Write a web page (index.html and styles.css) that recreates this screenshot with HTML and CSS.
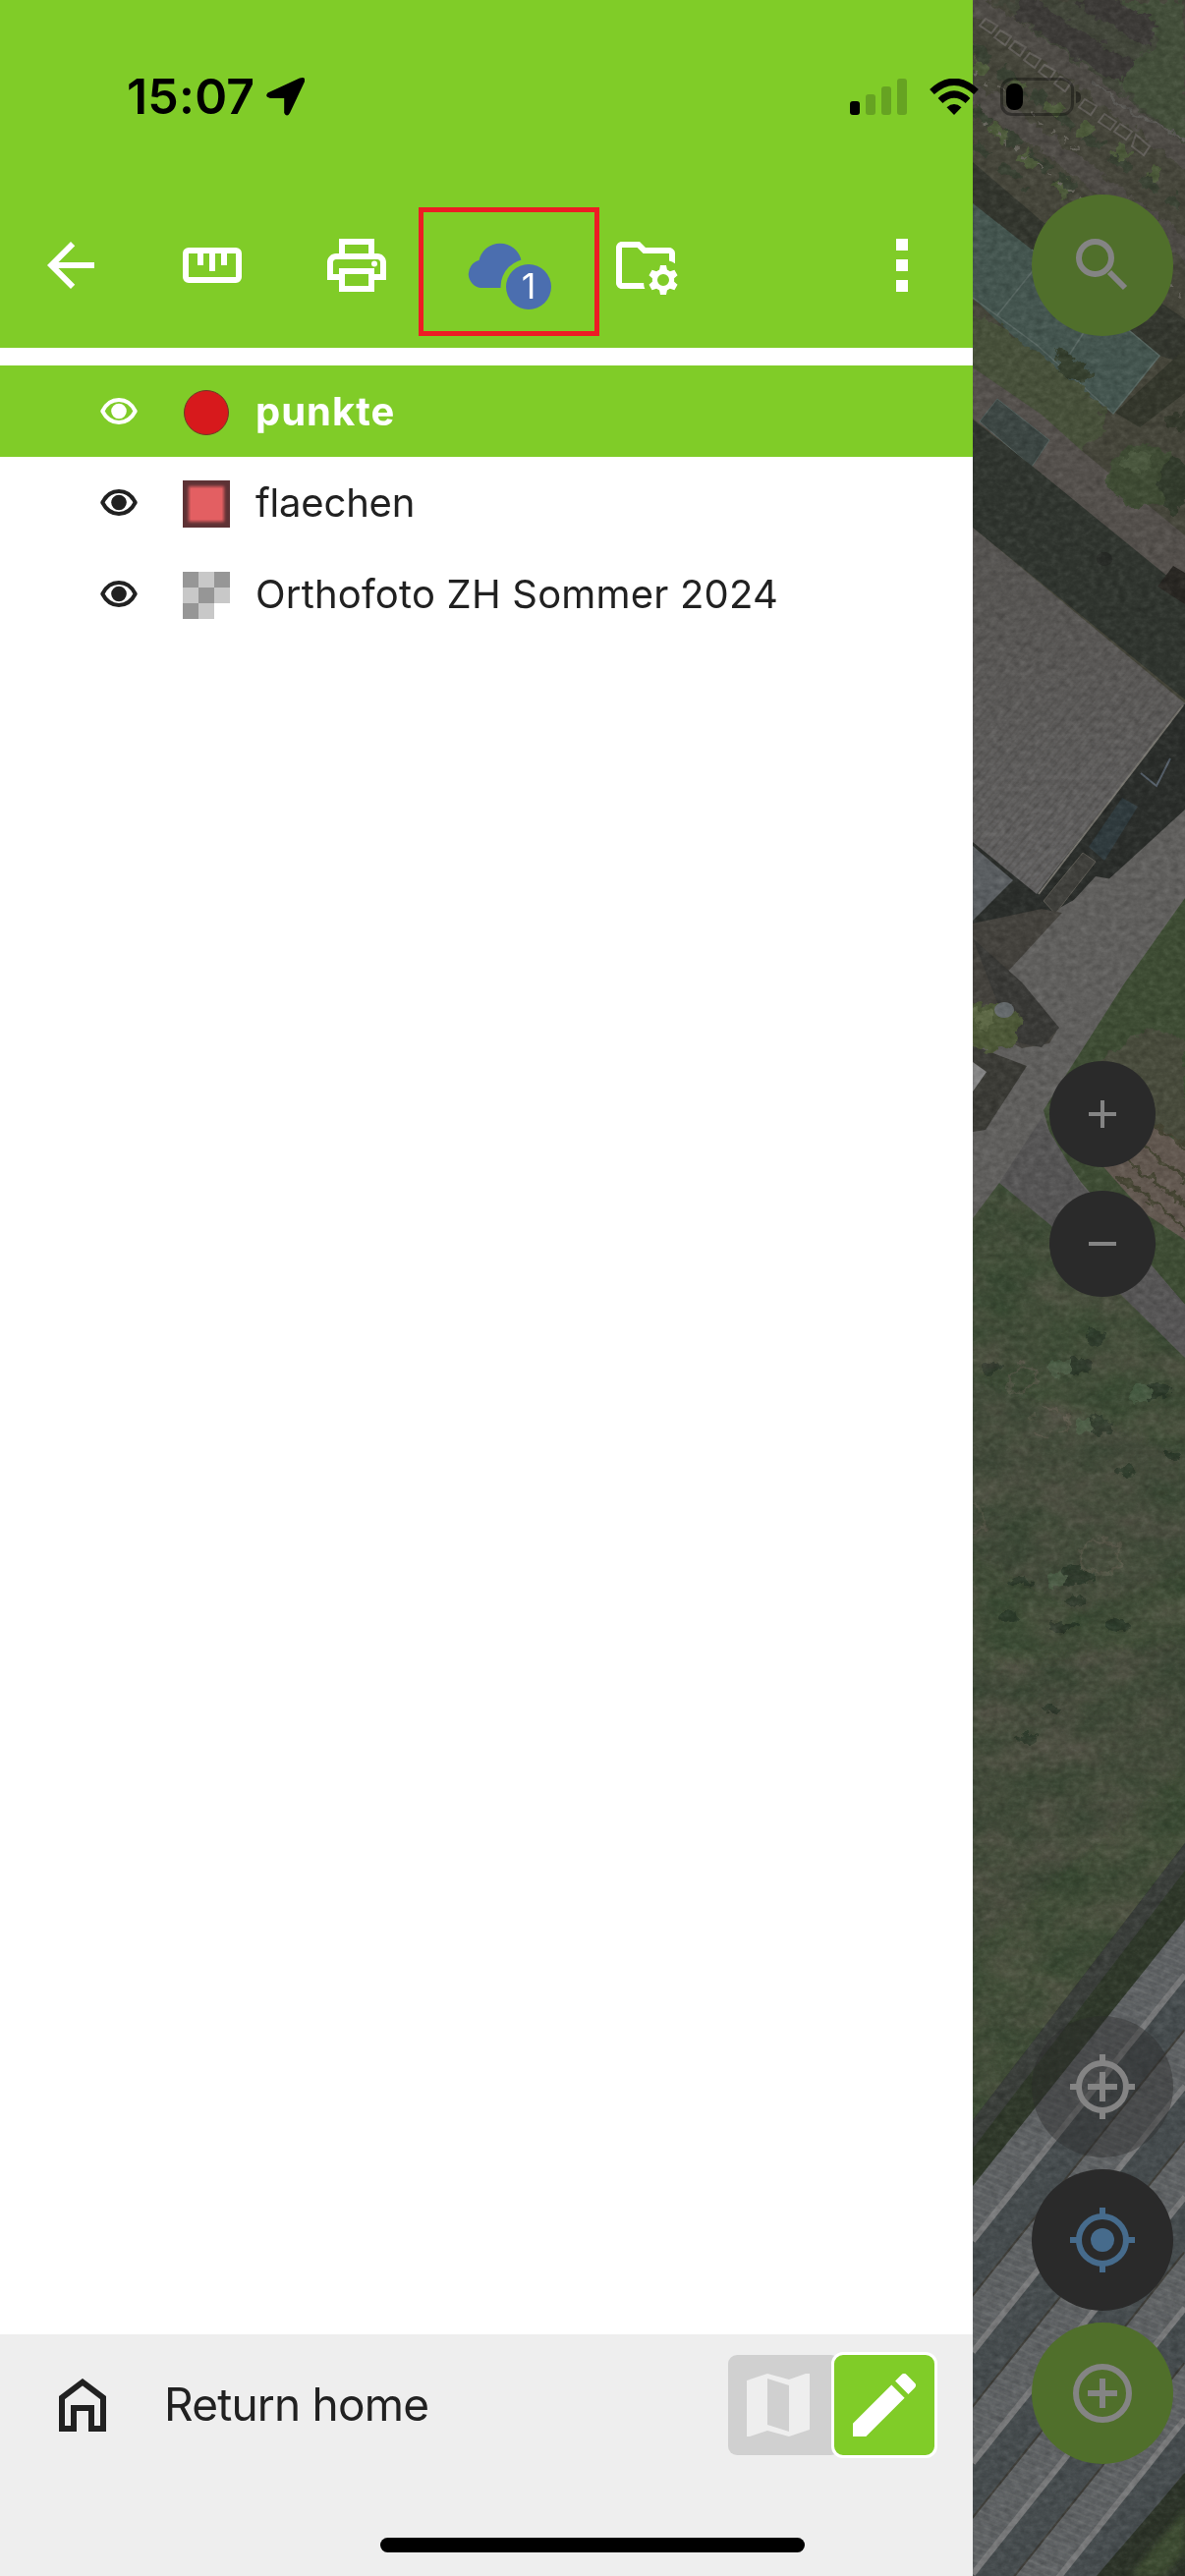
FILE: index.html
```html
<!DOCTYPE html>
<html lang="en">
<head>
<meta charset="utf-8">
<title>Map layers</title>
<link rel="stylesheet" href="styles.css">
</head>
<body>
<div class="screen">
  <aside class="drawer">
    <header class="toolbar">
      <button class="tool" aria-label="Back"><svg class="icon" viewBox="0 0 24 24"><path d="M20 11H7.83l5.59-5.59L12 4l-8 8 8 8 1.41-1.41L7.83 13H20z"/></svg></button>
      <button class="tool" aria-label="Measure"><svg class="icon" viewBox="0 0 24 24"><path fill-rule="evenodd" d="M4 6h16a2 2 0 0 1 2 2v8a2 2 0 0 1-2 2H4a2 2 0 0 1-2-2V8a2 2 0 0 1 2-2zM4 8v8h16V8h-3v4h-2V8h-2v6h-2V8H9v4H7V8z"/></svg></button>
      <button class="tool" aria-label="Print"><svg class="icon" viewBox="0 0 24 24"><path fill-rule="evenodd" d="M19 8h-1V3H6v5H5c-1.66 0-3 1.34-3 3v6h4v4h12v-4h4v-6c0-1.66-1.34-3-3-3zM8 5h8v3H8zM16 19H8v-4h8zM18 15v-2H6v2H4v-4c0-.55.45-1 1-1h14c.55 0 1 .45 1 1v4z"/><circle cx="18" cy="11.5" r="1"/></svg></button>
      <button class="cloud" aria-label="Cloud changes">
        <svg class="cloud-icon" viewBox="0 0 88 72">
          <defs><mask id="bite"><rect width="88" height="72" fill="#fff"/><circle cx="64" cy="47" r="28.500" fill="#000"/></mask></defs>
          <path mask="url(#bite)" d="M15 48A14.300 14.300 0 0 1 13.500 20A22 22 0 0 1 56.500 20V48z"/>
        </svg>
        <span class="badge">1</span>
      </button>
      <button class="tool" aria-label="Project folder"><svg class="icon" viewBox="0 0 24 24"><path d="M4 4C2.900 4 2 4.900 2 6v12c0 1.100.9 2 2 2h7.800q-.5-1-.4-2H4V6h5.200l2 2H20v2.500q1.100.3 2 .9V8c0-1.100-.9-2-2-2h-8l-2-2z"/><path fill-rule="evenodd" d="M17 12h2l.3 1.500 1 .6 1.500-.5 1.050 1.800-1.150 1v1.200l1.150 1-1.050 1.800-1.500-.5-1 .6L19 22h-2l-.3-1.500-1-.6-1.500.5-1.050-1.800 1.150-1v-1.200l-1.150-1 1.050-1.800 1.500.5 1-.6zM18 15a2 2 0 1 0 0 4 2 2 0 0 0 0-4z"/></svg></button>
      <button class="tool more" aria-label="More"><i></i><i></i><i></i></button>
    </header>

    <ul class="layers">
      <li class="layer active">
        <svg class="eye" viewBox="0 0 38 27"><path class="lid" d="M2.300 13.500C10-1.700 28-1.700 35.700 13.500C28 28.700 10 28.700 2.300 13.500z"/><circle cx="19" cy="13.500" r="7.800"/></svg>
        <span class="symbol point"></span><span class="name">punkte</span>
      </li>
      <li class="layer">
        <svg class="eye" viewBox="0 0 38 27"><path class="lid" d="M2.300 13.500C10-1.700 28-1.700 35.700 13.500C28 28.700 10 28.700 2.300 13.500z"/><circle cx="19" cy="13.500" r="7.800"/></svg>
        <span class="symbol area"></span><span class="name tight">flaechen</span>
      </li>
      <li class="layer">
        <svg class="eye" viewBox="0 0 38 27"><path class="lid" d="M2.300 13.500C10-1.700 28-1.700 35.700 13.500C28 28.700 10 28.700 2.300 13.500z"/><circle cx="19" cy="13.500" r="7.800"/></svg>
        <span class="symbol raster"><i></i><i></i><i></i><i></i><i></i><i></i><i></i><i></i></span><span class="name">Orthofoto ZH Sommer 2024</span>
      </li>
    </ul>

    <footer class="bottom">
      <svg class="home" viewBox="0 0 48 54"><path d="M3 51V19.500L24 3.700l21 15.800V51H33V30H15v21z"/></svg>
      <span class="return">Return home</span>
      <div class="modes">
        <button class="mode browse" aria-label="Browse"><svg viewBox="0 0 64 64"><path fill-rule="evenodd" d="M0 7L21 0L43 6L60 0H64V57L43 64L21 58L3 64H0zM21 5V52L43 59V12z"/></svg></button>
        <button class="mode edit" aria-label="Edit"><svg viewBox="0 0 64 64"><path d="M0 50.700V64H13.300L52.600 24.700L39.300 11.400zM62.900 14.400a3.500 3.500 0 0 0 0-5L54.600 1a3.500 3.500 0 0 0-5 0L43.100 7.500L56.400 20.900z"/></svg></button>
      </div>
    </footer>
  </aside>

  <main class="map">
    <svg class="ortho" viewBox="990 0 216 2622" preserveAspectRatio="none">
      <defs>
        <filter id="grain" x="0" y="0" width="1" height="1" color-interpolation-filters="sRGB"><feTurbulence type="fractalNoise" baseFrequency=".13 .17" numOctaves="4" seed="4"/><feColorMatrix values=".8 .8 0 0 -.3 .8 .8 0 0 -.3 .8 .8 0 0 -.3 0 0 0 0 1"/></filter>
        <filter id="patches" x="0" y="0" width="1" height="1" color-interpolation-filters="sRGB"><feTurbulence type="fractalNoise" baseFrequency=".018 .03" numOctaves="4" seed="9"/><feColorMatrix values="1.600 0 0 0 -.3 .8 .2 0 0 .02 1.200 0 0 0 -.1 0 0 0 0 1"/></filter>
        <filter id="rough" x="-.2" y="-.2" width="1.400" height="1.400" color-interpolation-filters="sRGB"><feTurbulence type="fractalNoise" baseFrequency=".09" numOctaves="3" seed="2"/><feDisplacementMap in="SourceGraphic" scale="16" xChannelSelector="R" yChannelSelector="G"/></filter>
        <filter id="soft"><feGaussianBlur stdDeviation="3"/></filter>
        <linearGradient id="roof" x1="0" y1="0" x2="0" y2="1"><stop stop-color="#555350"/><stop offset="1" stop-color="#636262"/></linearGradient>
        <pattern id="ribs" width="7" height="7" patternUnits="userSpaceOnUse" patternTransform="rotate(22)"><rect width="7" height="7" fill="#5d6062"/><path d="M0 2H7" stroke="#686a6b" stroke-width="1.300"/></pattern>
        <pattern id="tiles" width="6" height="6" patternUnits="userSpaceOnUse" patternTransform="rotate(-50)"><path d="M0 3H6" stroke="#53514f" stroke-width="1"/></pattern>
        <g id="tunnel">
          <path fill="url(#ribs)" d="M990 2225L1206 1954V2011L990 2282z"/>
          <path fill="#464c4e" d="M990 2282L1206 2011V2068L990 2339z"/>
          <path stroke="#777879" stroke-width="6" d="M990 2281L1206 2010"/>
          <path stroke="#3e3d38" stroke-width="4" d="M990 2338L1206 2067"/>
        </g>
      </defs>
      <path fill="#45453a" d="M990 0H1206V2622H990z"/>
      <g filter="url(#rough)">
        <path fill="#42463a" d="M1014 0H1206V165L1110 83z"/>
        <path fill="#434e3a" d="M1142 0H1206V145L1132 82L1180 42z"/>
        <path stroke="#3c3a37" stroke-width="26" d="M1038 5L1146 75M1104 -4L1172 36"/>
        <path stroke="#4e4b46" stroke-width="20" fill="none" d="M984 -3L1110 85L1212 165M984 92L1085 161L1212 258"/>
        <path stroke="#5b5a56" stroke-width="3" fill="none" d="M1112 83L1145 110L1212 145"/>
        <path stroke="#394133" stroke-width="11" fill="none" stroke-dasharray="22 14" d="M990 48L1095 132L1200 210M992 112L1095 196M990 145L1050 193"/>
        <path stroke="#4d5a3b" stroke-width="12" fill="none" stroke-dasharray="18 24" d="M990 65L1080 115L1180 180M1010 130L1100 210"/>
        <path stroke="#66645c" stroke-width="3" fill="none" stroke-dasharray="5 9" d="M992 73L1103 157M1000 125L1104 205L1206 302"/>
      </g>
      <path fill="#33362e" d="M990 165L1060 225L1206 325V370L1180 362L990 215z"/>
      <g fill="none" stroke="#625f5a" stroke-width="2"><path d="M1003 19l12 7-6 8-12-8zM1018 31l11 6-6 9-11-8zM1033 42l11 6-6 9-11-8zM1048 54l11 6-6 9-11-8zM1063 66l11 6-6 9-11-8zM1079 78l11 6-6 9-11-8zM1104 101l12 7-6 9-12-8zM1124 116l12 8-6 8-12-8zM1140 126l12 8-6 8-12-8zM1156 137l14 12-6 9-12-9z"/></g>
      <path fill="#44554f" d="M990 207L1050 254L1180 362L1133 421L1055 365L990 303z"/>
      <path fill="none" stroke="#586762" stroke-width="1.500" d="M990 303L1055 351L1133 421L1180 362L1050 254M1014 322L1062 262M1080 374L1118 315"/>
      <g filter="url(#rough)">
        <path fill="#47503a" d="M985 320L1010 325L1120 410L1125 440L1100 460L985 376z"/>
        <path fill="#36402f" d="M1075 352l35 28-8 10-24-10z"/>
      </g>
      <path fill="#54504c" d="M990 374L1060 422L1100 458L1206 545V604L1050 474L990 426z"/>
      <path fill="#3c4643" stroke="#53605d" d="M997 429L1015 406L1068 448L1050 475z"/>
      <path fill="#34372c" d="M1135 420L1206 355V400L1160 435z"/>
      <g filter="url(#rough)"><ellipse cx="1165" cy="485" rx="37" ry="32" fill="#3f4b34"/><ellipse cx="1195" cy="493" rx="15" ry="28" fill="#323b2c"/><ellipse cx="1157" cy="470" rx="14" ry="11" fill="#4b583f"/><ellipse cx="1199" cy="430" rx="14" ry="9" fill="#34392c"/></g>
      <path fill="#30352f" d="M990 427L1050 474L1206 601V712L990 537z"/>
      <ellipse cx="1124" cy="569" rx="8" ry="7" fill="#272a26"/>
      <path fill="#292723" d="M1178 597L1194 576L1206 583V615z"/>
      <path fill="#605f5d" d="M990 840L1206 720V1382L990 1240z"/>
      <path fill="#2b2e2b" d="M1206 716V824L1125 898L1050 940L1020 995L990 975V850z"/>
      <path fill="url(#roof)" d="M990 537L1206 716L1055 910L990 857z"/><path fill="url(#tiles)" d="M990 537L1206 716L1055 910L990 857z"/>
      <path stroke="#75736d" stroke-width="2" d="M1204 718L1057 910"/>
      <path fill="#303b3e" d="M1108 862L1142 812L1158 821L1124 876z"/>
      <path fill="#40403c" stroke="#5b5952" d="M1062 917L1102 868L1115 877L1074 930z"/>
      <path fill="none" stroke="#56606a" stroke-width="2" d="M1161 787L1177 800L1191 772"/>
      <path fill="#5a5e61" d="M990 861L1031 896L990 937z"/>
      <path fill="#44423d" d="M990 940L1060 925L1100 933L1020 995L1035 1000L1078 1045L1068 1062L1040 1067L990 1040z"/>
      <path fill="#605f5d" d="M1020 995L1115 892L1160 900L1160 960L1075 1050z"/>
      <path fill="#393936" d="M990 955L1040 1000L1078 1046L1060 1066L1030 1060z"/>
      <path fill="#3b3b36" d="M990 1064L1045 1085L1003 1150L990 1152z"/><path fill="#858585" d="M990 1081L1004 1091L990 1111z"/>
      <g filter="url(#rough)"><ellipse cx="1007" cy="1045" rx="32" ry="24" fill="#4d5838"/><ellipse cx="1000" cy="1036" rx="12" ry="9" fill="#5d6846"/></g>
      <ellipse cx="1022" cy="1028" rx="10" ry="8" fill="#656a6c"/>
      <path fill="#3e4c34" d="M1206 914L1145 1000L1062 1130L1070 1160L1100 1203L1206 1328z"/>
      <path fill="#484b3c" filter="url(#rough)" d="M1206 1058L1166 1045L1120 1080L1170 1145L1206 1170z"/>
      <path fill="#625850" d="M1170 1142L1206 1168V1262L1165 1235L1118 1182z"/>
      <path stroke="#454433" stroke-width="4" filter="url(#rough)" d="M1165 1138L1210 1172M1153 1158L1210 1202M1143 1177L1210 1229M1136 1194L1210 1254"/>
      <path fill="#565555" d="M1060 1138L1100 1205L1206 1328V1382L1068 1246L1017 1204z"/>
      <path fill="#414c38" d="M990 1240L1017 1204L1068 1246L1206 1382V1900L990 2180z"/>
      <path filter="url(#soft)" fill="#474b3c" d="M985 1400L1206 1480V1600L1100 1640L985 1580zM985 1700L1206 1670V1800L985 1990z" opacity=".6"/>
      <g filter="url(#rough)">
        <g fill="#2f3b2c"><ellipse cx="1114" cy="1361" rx="10" ry="8"/><ellipse cx="1097" cy="1389" rx="15" ry="8"/><ellipse cx="1009" cy="1392" rx="12" ry="6"/><ellipse cx="1177" cy="1415" rx="15" ry="9"/><ellipse cx="1118" cy="1451" rx="15" ry="9"/><ellipse cx="1146" cy="1497" rx="12" ry="4"/><ellipse cx="1192" cy="1481" rx="9" ry="4"/><ellipse cx="1096" cy="1605" rx="16" ry="9"/><ellipse cx="1095" cy="1630" rx="9" ry="6"/><ellipse cx="1038" cy="1610" rx="13" ry="4"/><ellipse cx="1026" cy="1646" rx="11" ry="6"/><ellipse cx="1085" cy="1655" rx="15" ry="4"/><ellipse cx="1140" cy="1655" rx="12" ry="5"/><ellipse cx="1068" cy="1740" rx="11" ry="4"/><ellipse cx="1045" cy="1769" rx="13" ry="4"/></g>
        <g fill="#4b5b45"><ellipse cx="1079" cy="1391" rx="12" ry="10"/><ellipse cx="1160" cy="1418" rx="11" ry="11"/><ellipse cx="1104" cy="1452" rx="9" ry="8"/><ellipse cx="1074" cy="1606" rx="8" ry="7"/></g>
        <g fill="none" stroke="#525445" stroke-width="3"><ellipse cx="1040" cy="1403" rx="14" ry="13"/><ellipse cx="1068" cy="1448" rx="20" ry="14" stroke-dasharray="16 9"/><ellipse cx="1120" cy="1584" rx="20" ry="17"/><ellipse cx="992" cy="1545" rx="10" ry="14"/></g>
      </g>
      <path fill="#2f382a" d="M990 2158L1206 1876V1970L990 2240z"/>
      <path fill="#3a3e3a" d="M990 2158L1206 1876V1904L990 2187z"/>
      <use href="#tunnel"/><use href="#tunnel" y="113"/><use href="#tunnel" y="226"/><use href="#tunnel" y="339"/><use href="#tunnel" y="452"/>
      <path fill="#2c3328" d="M1206 2517L1116 2622H1206z"/><path fill="#3e4b32" filter="url(#soft)" d="M1206 2555L1150 2622H1185L1206 2597z"/>
      <!-- the filter fills its bounding box, so the patches are clipped to the meadow -->
      <clipPath id="meadow"><path d="M990 1240L1017 1204L1068 1246L1206 1382V1876L990 2158z"/></clipPath>
      <g class="mottle" clip-path="url(#meadow)"><rect x="990" y="1200" width="216" height="960" filter="url(#patches)"/></g>
      <rect class="grain" x="990" y="0" width="216" height="2622" filter="url(#grain)"/>
    </svg>
    <nav class="fabs">
      <button class="fab green" aria-label="Search"><svg viewBox="0 0 72 72"><circle cx="28.500" cy="28.500" r="16.500"/><path d="M43 43L59 59"/></svg></button>
      <div class="zooms">
        <button class="fab small" aria-label="Zoom in"><svg viewBox="0 0 72 72"><path d="M22 36H50M36 22V50"/></svg></button>
        <button class="fab small" aria-label="Zoom out"><svg viewBox="0 0 72 72"><path d="M22 36H50"/></svg></button>
      </div>
      <div class="actions">
        <button class="fab clear" aria-label="Lock to position"><svg viewBox="0 0 72 72"><circle cx="36" cy="36" r="24"/><path d="M21 36H51M36 21V51M36 3V12M36 60V69M3 36H12M60 36H69"/></svg></button>
        <button class="fab dark" aria-label="My location"><svg viewBox="0 0 72 72"><circle cx="36" cy="36" r="24"/><circle class="dot" cx="36" cy="36" r="12"/><path d="M36 3V12M36 60V69M3 36H12M60 36H69"/></svg></button>
        <button class="fab green" aria-label="Add feature"><svg viewBox="0 0 72 72"><circle cx="36" cy="36" r="27"/><path d="M21 36H51M36 21V51"/></svg></button>
      </div>
    </nav>
  </main>

  <div class="status">
    <span class="time">15:07</span>
    <svg class="locate" viewBox="0 0 39 39"><path d="M34 .6Q40.500-1.500 38.800 4.500L24 36Q21 41 18.200 36V21H4Q-2 19.500 1.500 15.500z"/></svg>
    <svg class="signal" viewBox="0 0 58 37"><rect y="23" width="10" height="14" rx="3"/><g fill="#66a322"><rect x="16" y="16" width="10" height="21" rx="3"/><rect x="32" y="8" width="10" height="29" rx="3"/><rect x="48" width="10" height="37" rx="3"/></g></svg>
    <svg class="wifi" viewBox="0 0 50 37"><path d="M25 37L17.500 29.300Q25 22.500 32.500 29.300z"/><path class="arc" d="M11 22.500Q25 9.500 39 22.500M2.500 13.500Q25-7 47.500 13.500"/></svg>
    <span class="battery"><i></i></span>
  </div>
  <div class="home-bar"></div>
</div>
</body>
</html>
```
FILE: styles.css
```css
* { box-sizing: border-box; }
body { margin: 0; font-family: Inter, "Liberation Sans", sans-serif; color: #212121; }
button { border: 0; padding: 0; margin: 0; background: none; font: inherit; color: inherit; }
svg { display: block; flex: none; }

.screen { position: relative; display: grid; grid-template-columns: 990px 216px; width: 1206px; height: 2622px; overflow: hidden; }

/* Layer drawer */
.drawer { display: flex; flex-direction: column; background: #fff; }
.toolbar { display: flex; align-items: flex-end; height: 354px; padding: 0 36px 12px; background: #80cc28; }
.tool { display: flex; align-items: center; justify-content: center; width: 72px; height: 131px; margin-right: 75px; }
.tool:nth-child(1) { margin-right: 72px; }
.tool:nth-child(3) { margin-right: 27px; }
.tool .icon { margin-bottom: 13px; }
.icon { width: 72px; height: 72px; fill: #fff; }
.cloud { position: relative; display: flex; align-items: flex-start; width: 184px; height: 131px; margin-right: 11px; border: 5px solid #ed1c24; }
.cloud-icon { width: 88px; height: 72px; margin: 29px 0 0 43px; fill: #4b6eaf; }
.badge { position: absolute; left: 84px; top: 53px; width: 46px; height: 46px; border-radius: 50%; background: #4b6eaf; color: #fff; font-size: 36px; line-height: 45px; text-align: center; }
.more { flex-direction: column; gap: 9px; margin: 0 0 0 auto; padding-bottom: 13px; }
.more i { width: 12px; height: 12px; background: #fff; }

.layers { list-style: none; margin: 18px 0 0; padding: 0; flex: 1; }
.layer { display: flex; align-items: center; height: 93px; padding-left: 102px; }
.layer.active { background: #80cc28; color: #fff; }
.eye { width: 38px; height: 27px; fill: currentColor; }
.lid { fill: none; stroke: currentColor; stroke-width: 4; stroke-linejoin: round; }
.symbol { position: relative; top: 1.500px; width: 48px; height: 48px; margin: 0 26px 0 46px; flex: none; }
.point { width: 46px; height: 46px; margin: 0 27px 0 47px; border-radius: 50%; background: #d7191c; border: 1.500px solid #6b3a25; }
.area { background: #5d3235; }
.area::after { content: ""; position: absolute; inset: 8px; background: #e35f62; box-shadow: 0 0 3px 2px #e35f62; }
.raster { display: grid; grid-template-columns: repeat(3, 16px); grid-auto-rows: 16px; }
.raster i { background: #c8c8c8; }
.raster i:nth-child(odd) { background: #969696; }
.name { font-size: 40px; letter-spacing: .2px; white-space: nowrap; }
.name.tight { letter-spacing: -.2px; }
.active .name { font-weight: 700; letter-spacing: 1px; }

.bottom { display: flex; align-items: center; height: 246px; padding: 0 36px 102px 60px; background: #eee; }
.home { width: 48px; height: 54px; fill: none; stroke: #212121; stroke-width: 6; }
.return { margin: 0 0 2px 59px; font-size: 46px; letter-spacing: -.8px; }
.modes { display: flex; align-items: center; margin-left: auto; }
.mode { display: flex; align-items: center; justify-content: center; height: 102px; }
.mode svg { width: 64px; height: 64px; }
.browse { width: 114px; margin-right: -9px; padding-right: 12px; border-radius: 9px; background: #d0d0d0; fill: #eee; }
.edit { width: 108px; height: 108px; border: 3px solid #fff; border-radius: 12px; background: #80cc28; fill: #fff; }

/* Dimmed map with floating controls */
.map { position: relative; overflow: hidden; }
.ortho { position: absolute; inset: 0; width: 216px; height: 2622px; }
.grain { mix-blend-mode: soft-light; opacity: .24; }
.mottle { mix-blend-mode: soft-light; opacity: .22; }
.fabs { position: relative; display: flex; flex-direction: column; align-items: center; height: 100%; padding: 198px 12px 114px 60px; }
.fab { display: flex; align-items: center; justify-content: center; width: 144px; height: 144px; border-radius: 50%; color: #848484; }
.fab svg { width: 72px; height: 72px; fill: none; stroke: currentColor; stroke-width: 6; }
.green { background: #506f2b; }
.dark { background: #2a2a2a; color: #466b8c; }
.dark .dot { fill: currentColor; stroke: none; }
.clear { background: rgba(42, 42, 42, .42); }
.small { width: 108px; height: 108px; background: #2a2a2a; }
.fab.small svg { stroke-width: 4; }
.zooms { display: grid; gap: 24px; margin-top: 738px; }
.actions { display: grid; gap: 12px; margin-top: auto; }

/* System overlays */
.status { position: absolute; left: 0; top: 78px; width: 100%; height: 40px; display: flex; align-items: center; padding-left: 129px; }
.time { width: 142px; font-size: 50px; font-weight: 600; line-height: 40px; letter-spacing: .2px; color: #000; }
.locate { width: 39px; height: 39px; }
.signal { width: 58px; height: 37px; margin-left: 555px; }
.wifi { width: 50px; height: 37px; margin-left: 23px; }
.arc { fill: none; stroke: #000; stroke-width: 7; }
.battery { position: relative; width: 75px; height: 39px; margin-left: 22px; border: 3px solid rgba(0, 0, 0, .35); border-radius: 12px; padding: 3px; }
.battery i { display: block; width: 17px; height: 27px; border-radius: 8px; background: #000; }
.battery::after { content: ""; position: absolute; left: 74px; top: 11px; width: 5px; height: 12px; border-radius: 0 5px 5px 0; background: rgba(0, 0, 0, .4); }
.home-bar { position: absolute; left: 387px; bottom: 24px; width: 432px; height: 15px; border-radius: 8px; background: #000; }
```
